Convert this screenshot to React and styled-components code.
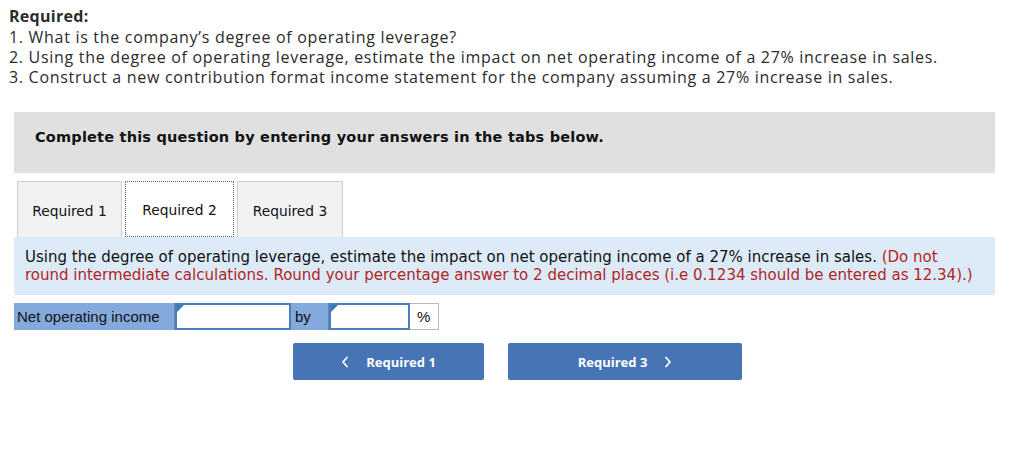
import React from "react";
import styled, { createGlobalStyle } from "styled-components";

const GlobalStyle = createGlobalStyle`
  body {
    margin: 0;
    background: #fff;
    color: #222;
  }
`;

const Page = styled.div`
  width: 1024px;
  padding-top: 6px;
`;

const Intro = styled.div`
  padding-left: 9px;
  font-family: "Open Sans", "Liberation Sans", sans-serif;
  font-size: 16px;
  letter-spacing: 0.7px;
  line-height: 20px;
  color: #2b2b2b;
`;

const IntroTitle = styled.div`
  font-weight: 700;
  letter-spacing: 0.3px;
  margin-bottom: 1px;
`;

const Panel = styled.div`
  margin: 25px 29px 0 14px;
`;

const Banner = styled.div`
  box-sizing: border-box;
  height: 61px;
  background: #e0e0e0;
  padding: 16px 0 0 21px;
  font-family: "DejaVu Sans", Verdana, sans-serif;
  font-weight: 700;
  font-size: 14.5px;
  letter-spacing: 0.2px;
  line-height: 18px;
  color: #111;
`;

const TabRow = styled.div`
  display: flex;
  gap: 3px;
  margin: 8px 0 0 3px;
`;

const Tab = styled.div`
  box-sizing: border-box;
  width: ${p => p.$w}px;
  height: 56px;
  display: flex;
  align-items: center;
  justify-content: center;
  padding-top: 2px;
  font-family: "DejaVu Sans", Verdana, sans-serif;
  font-size: 13.8px;
  color: #111;
  background: ${p => (p.$active ? "#fff" : "#f2f2f2")};
  border: 1px ${p => (p.$active ? "dotted #3d6fb8" : "solid #cfcfcf")};
  border-bottom: ${p => (p.$active ? "1px dotted #3d6fb8" : "none")};
`;

const Prompt = styled.div`
  background: #ddebf8;
  padding: 11px 11px 11px 11px;
  font-family: "DejaVu Sans", Verdana, sans-serif;
  font-size: 15px;
  line-height: 18px;
  color: #111;
`;

const Hint = styled.span`
  color: #b1251f;
`;

const AnswerRow = styled.div`
  display: flex;
  height: 27px;
  margin-top: 8px;
  font-family: "Liberation Sans", Arial, sans-serif;
  font-size: 15px;
  color: #111;
`;

const Cell = styled.div`
  box-sizing: border-box;
  width: ${p => p.$w}px;
  display: flex;
  align-items: center;
  padding-left: ${p => p.$pad || 3}px;
  background: ${p => p.$bg || "#84a9dc"};
  border-right: 1px solid #5f86bd;
`;

const PctCell = styled(Cell)`
  background: #fff;
  border: 1px solid #b9b9b9;
  border-left: none;
  padding-left: 7px;
`;

const InputWrap = styled.div`
  position: relative;
  box-sizing: border-box;
  width: ${p => p.$w}px;
  border: 2px solid #4a7ebf;
  background: #fff;
  &::before {
    content: "";
    position: absolute;
    top: 0;
    left: 0;
    border-top: 7px solid #3f73ba;
    border-right: 7px solid transparent;
  }
`;

const Input = styled.input`
  width: 100%;
  height: 100%;
  border: none;
  outline: none;
  padding: 0;
  background: transparent;
`;

const NavRow = styled.div`
  display: flex;
  gap: 24px;
  margin: 13px 0 0 279px;
`;

const NavButton = styled.button`
  width: ${p => p.$w}px;
  height: 37px;
  border: none;
  border-radius: 2px;
  background: #4674b4;
  color: #fff;
  font-family: "Open Sans", "Liberation Sans", sans-serif;
  font-weight: 700;
  font-size: 13px;
  display: flex;
  align-items: center;
  justify-content: center;
  gap: 17px;
  padding: 0;
`;

const Chevron = ({ dir }) => (
  <svg width="8" height="12" viewBox="0 0 8 12" fill="none">
    <path
      d={dir === "left" ? "M6 1.5 L2 6 L6 10.5" : "M2 1.5 L6 6 L2 10.5"}
      stroke="#fff"
      strokeWidth="1.8"
      strokeLinecap="round"
      strokeLinejoin="round"
    />
  </svg>
);

export default function App() {
  return (
    <Page>
      <GlobalStyle />
      <Intro>
        <IntroTitle>Required:</IntroTitle>
        <div>1. What is the company’s degree of operating leverage?</div>
        <div>
          2. Using the degree of operating leverage, estimate the impact on net operating income of a 27% increase in sales.
        </div>
        <div>
          3. Construct a new contribution format income statement for the company assuming a 27% increase in sales.
        </div>
      </Intro>
      <Panel>
        <Banner>Complete this question by entering your answers in the tabs below.</Banner>
        <TabRow>
          <Tab $w={105}>Required 1</Tab>
          <Tab $w={109} $active>Required 2</Tab>
          <Tab $w={106}>Required 3</Tab>
        </TabRow>
        <Prompt>
          Using the degree of operating leverage, estimate the impact on net operating income of a 27% increase in sales.{" "}
          <Hint>
            (Do not round intermediate calculations. Round your percentage answer to 2 decimal places (i.e 0.1234 should be entered as 12.34).)
          </Hint>
        </Prompt>
        <AnswerRow>
          <Cell $w={161}>Net operating income</Cell>
          <InputWrap $w={116}>
            <Input />
          </InputWrap>
          <Cell $w={38} $pad={4}>by</Cell>
          <InputWrap $w={81}>
            <Input />
          </InputWrap>
          <PctCell $w={29}>%</PctCell>
        </AnswerRow>
        <NavRow>
          <NavButton $w={191}>
            <Chevron dir="left" />
            Required 1
          </NavButton>
          <NavButton $w={234}>
            Required 3
            <Chevron dir="right" />
          </NavButton>
        </NavRow>
      </Panel>
    </Page>
  );
}
